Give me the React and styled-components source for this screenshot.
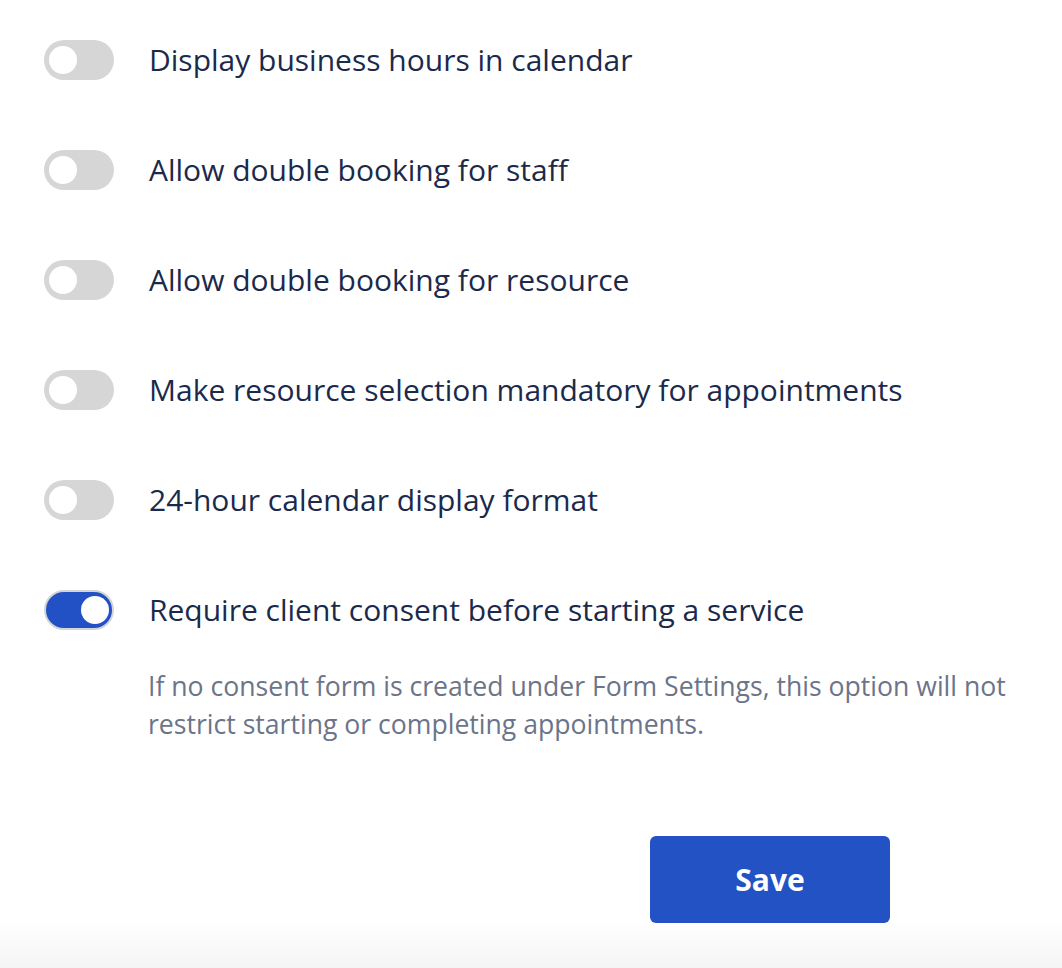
import React, { useState } from "react";
import styled, { createGlobalStyle } from "styled-components";

const Global = createGlobalStyle`
  html, body { margin: 0; padding: 0; background: #ffffff; }
  body { font-family: "Open Sans", "Noto Sans", sans-serif; }
`;

const Page = styled.div`
  width: 1062px;
  height: 968px;
  box-sizing: border-box;
  padding: 40px 0 0 44px;
  background: linear-gradient(to bottom, #ffffff 0px, #ffffff 918px, #f4f4f4 968px);
  display: flex;
  flex-direction: column;
`;

const List = styled.div`
  display: flex;
  flex-direction: column;
  gap: 70px;
`;

const Row = styled.div`
  display: flex;
  flex-direction: column;
`;

const RowMain = styled.label`
  display: flex;
  align-items: center;
  gap: 35px;
  cursor: pointer;
`;

const Track = styled.span`
  position: relative;
  flex: none;
  width: 70px;
  height: 40px;
  border-radius: 20px;
  box-sizing: border-box;
  background: ${(p) => (p.$on ? "#2151c5" : "#d6d6d6")};
  border: ${(p) => (p.$on ? "2px solid #d4d4d4" : "none")};
  transition: background 0.2s;
`;

const Knob = styled.span`
  position: absolute;
  top: 50%;
  left: ${(p) => (p.$on ? "auto" : "5px")};
  right: ${(p) => (p.$on ? "3px" : "auto")};
  width: 28px;
  height: 28px;
  margin-top: -14px;
  border-radius: 50%;
  background: #ffffff;
`;

const Label = styled.span`
  font-size: 30px;
  line-height: 40px;
  color: #1b2a4b;
  white-space: nowrap;
`;

const Hint = styled.p`
  margin: 37px 0 0 104px;
  max-width: 880px;
  font-size: 26.6px;
  line-height: 38px;
  color: #6b7489;
`;

const Footer = styled.div`
  display: flex;
  padding: 93px 0 0 606px;
`;

const SaveButton = styled.button`
  width: 240px;
  height: 87px;
  border: none;
  border-radius: 6px;
  background: #2252c4;
  color: #ffffff;
  font-family: "Open Sans", "Noto Sans", sans-serif;
  font-size: 30px;
  font-weight: 700;
  cursor: pointer;
`;

const Toggle = ({ on, onClick }) => (
  <Track $on={on} onClick={onClick}>
    <Knob $on={on} />
  </Track>
);

const settings = [
  { label: "Display business hours in calendar", on: false },
  { label: "Allow double booking for staff", on: false },
  { label: "Allow double booking for resource", on: false },
  { label: "Make resource selection mandatory for appointments", on: false },
  { label: "24-hour calendar display format", on: false },
  {
    label: "Require client consent before starting a service",
    on: true,
    hint: "If no consent form is created under Form Settings, this option will not restrict starting or completing appointments.",
  },
];

export default function App() {
  const [state, setState] = useState(settings.map((s) => s.on));
  return (
    <>
      <Global />
      <Page>
        <List>
          {settings.map((s, i) => (
            <Row key={s.label}>
              <RowMain
                onClick={() =>
                  setState((st) => st.map((v, j) => (j === i ? !v : v)))
                }
              >
                <Toggle on={state[i]} />
                <Label>{s.label}</Label>
              </RowMain>
              {s.hint && <Hint>{s.hint}</Hint>}
            </Row>
          ))}
        </List>
        <Footer>
          <SaveButton>Save</SaveButton>
        </Footer>
      </Page>
    </>
  );
}
